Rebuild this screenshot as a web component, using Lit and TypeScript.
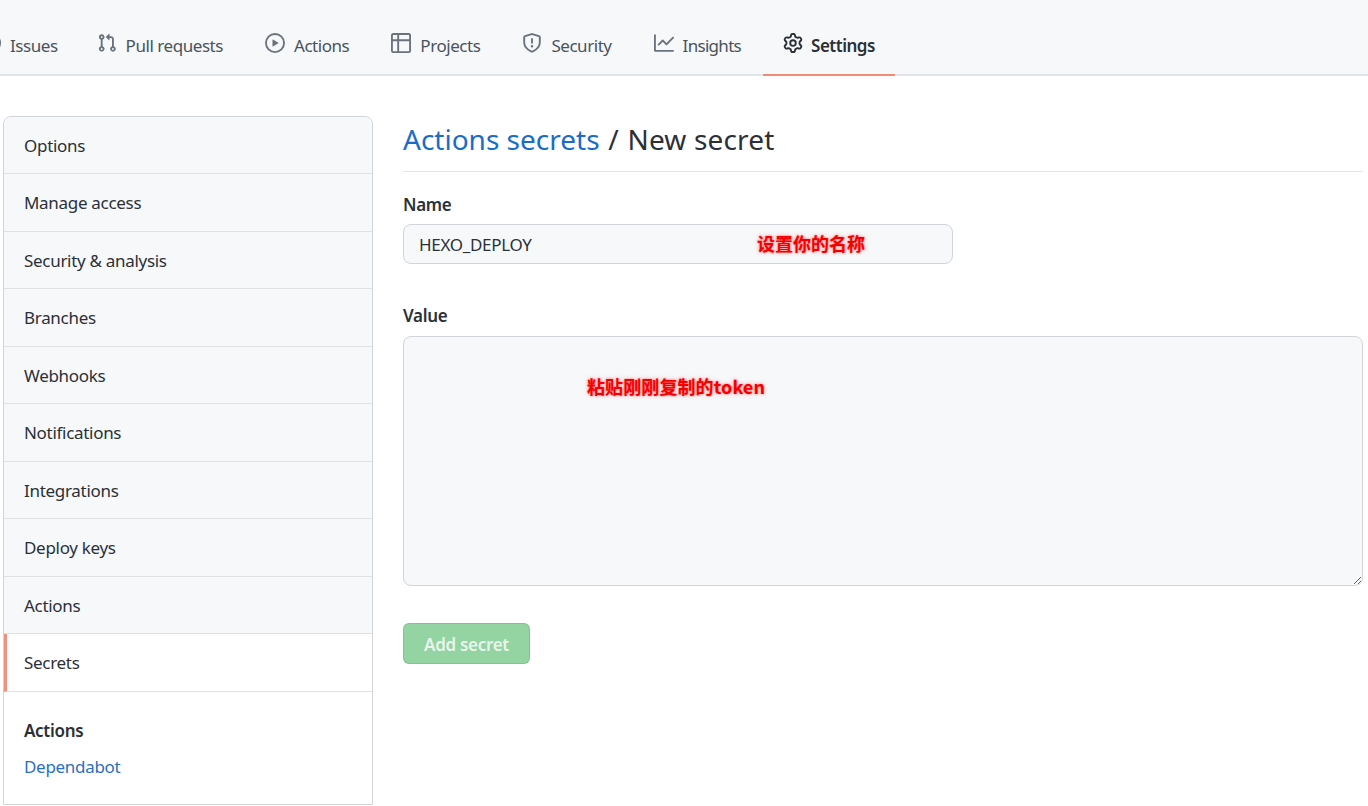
import { LitElement, html, css, svg } from "lit";
import { customElement } from "lit/decorators.js";

const ICONS: Record<string, string> = {
  issue: "M8 9.5a1.5 1.5 0 100-3 1.5 1.5 0 000 3zM8 0a8 8 0 100 16A8 8 0 008 0zM1.5 8a6.5 6.5 0 1113 0 6.5 6.5 0 01-13 0z",
  pr: "M7.177 3.073L9.573.677A.25.25 0 0110 .854v4.792a.25.25 0 01-.427.177L7.177 3.427a.25.25 0 010-.354zM3.75 2.5a.75.75 0 100 1.5.75.75 0 000-1.5zm-2.25.75a2.25 2.25 0 113 2.122v5.256a2.251 2.251 0 11-1.5 0V5.372A2.25 2.25 0 011.5 3.25zM11 2.5h-1V4h1a1 1 0 011 1v5.628a2.251 2.251 0 101.5 0V5A2.5 2.5 0 0011 2.5zm1 10.25a.75.75 0 111.5 0 .75.75 0 01-1.5 0zM3.75 12a.75.75 0 100 1.5.75.75 0 000-1.5z",
  play: "M1.5 8a6.5 6.5 0 1113 0 6.5 6.5 0 01-13 0zM8 0a8 8 0 100 16A8 8 0 008 0zM6.379 5.227A.25.25 0 006 5.442v5.117a.25.25 0 00.379.214l4.264-2.559a.25.25 0 000-.428L6.379 5.227z",
  project: "M0 1.75C0 .784.784 0 1.75 0h12.5C15.216 0 16 .784 16 1.75v12.5A1.75 1.75 0 0114.25 16H1.75A1.75 1.75 0 010 14.25V1.75zM1.5 6.5v7.75c0 .138.112.25.25.25H5v-8H1.5zM5 5H1.5V1.75a.25.25 0 01.25-.25H5V5zm1.5 1.5v8h7.75a.25.25 0 00.25-.25V6.5h-8zm8-1.5h-8V1.5h7.75a.25.25 0 01.25.25V5z",
  shield: "M7.467.133a1.75 1.75 0 011.066 0l5.25 1.68A1.75 1.75 0 0115 3.48V7c0 1.566-.32 3.182-1.303 4.682-.983 1.498-2.585 2.813-5.032 3.855a1.7 1.7 0 01-1.33 0c-2.447-1.042-4.049-2.357-5.032-3.855C1.32 10.182 1 8.566 1 7V3.48a1.75 1.75 0 011.217-1.667l5.25-1.68zm.61 1.429a.25.25 0 00-.153 0l-5.25 1.68a.25.25 0 00-.174.238V7c0 1.358.275 2.666 1.057 3.86.784 1.194 2.121 2.34 4.366 3.297a.2.2 0 00.154 0c2.245-.956 3.582-2.104 4.366-3.298C13.225 9.666 13.5 8.358 13.5 7V3.48a.25.25 0 00-.174-.237l-5.25-1.68zM9 10.5a1 1 0 11-2 0 1 1 0 012 0zm-.25-5.75a.75.75 0 10-1.5 0v3a.75.75 0 001.5 0v-3z",
  graph: "M1.5 1.75a.75.75 0 00-1.5 0v12.5c0 .414.336.75.75.75h14.5a.75.75 0 000-1.5H1.5V1.75zm14.28 2.53a.75.75 0 00-1.06-1.06L10 7.94 7.53 5.47a.75.75 0 00-1.06 0L3.22 8.72a.75.75 0 001.06 1.06L7 7.06l2.47 2.47a.75.75 0 001.06 0l5.25-5.25z",
  gear: "M7.429 1.525a6.593 6.593 0 011.142 0c.036.003.108.036.137.146l.289 1.105c.147.56.55.967.997 1.189.174.086.341.183.501.29.417.278.97.423 1.53.27l1.102-.303c.11-.03.175.016.195.046.219.31.41.641.573.989.014.031.022.11-.059.19l-.815.806c-.411.406-.562.957-.53 1.456a4.588 4.588 0 010 .582c-.032.499.119 1.05.53 1.456l.815.806c.08.08.073.159.059.19a6.494 6.494 0 01-.573.99c-.02.029-.086.074-.195.045l-1.103-.303c-.559-.153-1.112-.008-1.529.27-.16.107-.327.204-.5.29-.449.222-.851.628-.998 1.189l-.289 1.105c-.029.11-.101.143-.137.146a6.613 6.613 0 01-1.142 0c-.036-.003-.108-.037-.137-.146l-.289-1.105c-.147-.56-.55-.967-.997-1.189a4.502 4.502 0 01-.501-.29c-.417-.278-.97-.423-1.53-.27l-1.102.303c-.11.03-.175-.016-.195-.046a6.492 6.492 0 01-.573-.989c-.014-.031-.022-.11.059-.19l.815-.806c.411-.406.562-.957.53-1.456a4.587 4.587 0 010-.582c.032-.499-.119-1.05-.53-1.456l-.815-.806c-.08-.08-.073-.159-.059-.19a6.44 6.44 0 01.573-.99c.02-.029.086-.075.195-.045l1.103.303c.559.153 1.112.008 1.529-.27.16-.107.327-.204.5-.29.449-.222.851-.628.998-1.189l.289-1.105c.029-.11.101-.143.137-.146zM8 0c-.236 0-.47.01-.701.03-.743.065-1.29.615-1.458 1.261l-.29 1.106c-.017.066-.078.158-.211.224a5.994 5.994 0 00-.668.386c-.123.082-.233.09-.3.071L3.27 2.776c-.644-.177-1.392.02-1.82.63a7.977 7.977 0 00-.704 1.217c-.315.675-.111 1.422.363 1.891l.815.806c.05.048.098.147.088.294a6.084 6.084 0 000 .772c.01.147-.038.246-.088.294l-.815.806c-.474.469-.678 1.216-.363 1.891.2.428.436.835.704 1.218.428.609 1.176.806 1.82.63l1.103-.303c.066-.019.176-.011.299.071.213.143.436.272.668.386.133.066.194.158.212.224l.289 1.106c.169.646.715 1.196 1.458 1.26a8.094 8.094 0 001.402 0c.743-.064 1.29-.614 1.458-1.26l.29-1.106c.017-.066.078-.158.211-.224a5.98 5.98 0 00.668-.386c.123-.082.233-.09.3-.071l1.102.302c.644.177 1.392-.02 1.82-.63.268-.382.505-.789.704-1.217.315-.675.111-1.422-.364-1.891l-.814-.806c-.05-.048-.098-.147-.088-.294a6.1 6.1 0 000-.772c-.01-.147.039-.246.088-.294l.814-.806c.475-.469.679-1.216.364-1.891a7.992 7.992 0 00-.704-1.218c-.428-.609-1.176-.806-1.82-.63l-1.103.303c-.066.019-.176.011-.299-.071a5.991 5.991 0 00-.668-.386c-.133-.066-.194-.158-.212-.224L10.16 1.29C9.99.645 9.444.095 8.701.031A8.094 8.094 0 008 0zm1.5 8a1.5 1.5 0 11-3 0 1.5 1.5 0 013 0zM11 8a3 3 0 11-6 0 3 3 0 016 0z",
};

const TABS = [
  ["issue", "Issues"],
  ["pr", "Pull requests"],
  ["play", "Actions"],
  ["project", "Projects"],
  ["shield", "Security"],
  ["graph", "Insights"],
  ["gear", "Settings"],
];
const MENU = ["Options", "Manage access", "Security & analysis", "Branches", "Webhooks", "Notifications", "Integrations", "Deploy keys", "Actions", "Secrets"];

@customElement("app-root")
export class AppRoot extends LitElement {
  static styles = css`
    :host {
      display: block;
      width: 1368px;
      height: 806px;
      overflow: hidden;
      background: #fff;
      color: #2b3036;
      font-family: "Noto Sans", "Noto Sans CJK SC", sans-serif;
      font-size: 17px;
      letter-spacing: -0.3px;
    }
    .tabs {
      display: flex;
      height: 76px;
      box-sizing: border-box;
      background: #f6f8fa;
      border-bottom: 2px solid #e1e4e8;
    }
    .tabnav {
      display: flex;
      margin-left: -39px;
      gap: 2px;
    }
    .tab {
      display: flex;
      align-items: center;
      gap: 9px;
      height: 76px;
      box-sizing: border-box;
      padding: 24px 20px 10px;
      color: #4a535c;
      letter-spacing: -0.45px;
    }
    .tab:first-child { margin-right: -3px; }
    .tab:nth-child(6) { letter-spacing: -0.7px; }
    .tab svg { fill: #6a737d; flex: none; margin-top: -4px; }
    .tab.on {
      color: #2b3036;
      font-weight: 600;
      padding-bottom: 8px;
      border-bottom: 2px solid #f28a74;
      gap: 8px;
      letter-spacing: -0.5px;
    }
    .tab.on svg { fill: #2b3036; }
    .body {
      display: flex;
      padding: 40px 5px 0 3px;
      gap: 30px;
    }
    .side {
      width: 370px;
      flex: none;
      box-sizing: border-box;
      border: 1px solid #d1d5da;
      border-radius: 8px 8px 0 0;
      height: 689px;
    }
    .item {
      display: flex;
      align-items: center;
      box-sizing: border-box;
      height: 57.5px;
      padding: 0.5px 0 0 20px;
      background: #f6f8fa;
      border-bottom: 1px solid #dfe2e5;
    }
    .item:first-child { border-radius: 8px 8px 0 0; height: 57px; }
    .item.on {
      background: #fff;
      border-left: 3px solid #f0917d;
      padding-left: 17px;
    }
    .group { padding: 27px 20px 0; }
    .group h4 { margin: 0 0 12px; font-size: 17px; font-weight: 600; line-height: 24px; }
    .group a { color: #2a6fbf; line-height: 24px; display: block; }
    .main { flex: 1; min-width: 0; }
    h2 {
      margin: 0;
      height: 56px;
      box-sizing: border-box;
      border-bottom: 1px solid #e1e4e8;
      font-size: 28px;
      font-weight: 400;
      line-height: 46px;
      letter-spacing: 0;
    }
    h2 a { color: #1a6cc6; }
    .sep { margin: 0 1.5px; }
    .current { letter-spacing: 0.15px; }
    label { display: block; font-weight: 600; line-height: 24px; }
    .name-label { margin-top: 21px; }
    .value-label { margin-top: 40px; }
    .field { position: relative; }
    .name-field { margin-top: 7px; width: 550px; }
    .value-field { margin-top: 8px; }
    input, textarea {
      display: block;
      box-sizing: border-box;
      width: 100%;
      margin: 0;
      background: #f6f8fa;
      border: 1px solid #d1d5da;
      border-radius: 8px;
      color: #2b3036;
      font: inherit;
      letter-spacing: -0.3px;
      outline: none;
    }
    input { height: 40px; padding: 1px 15px 0; }
    textarea { height: 250px; padding: 10px 15px; }
    .note {
      position: absolute;
      color: #f40000;
      font-family: "Noto Sans CJK SC", "Noto Sans", sans-serif;
      font-size: 18px;
      font-weight: 700;
      line-height: 24px;
      white-space: nowrap;
      letter-spacing: 0;
      text-shadow: 0 0 2px rgba(255, 90, 90, .8), 0 0 4px rgba(255, 140, 140, .7);
      pointer-events: none;
    }
    .note1 { left: 354px; top: 7px; }
    .note2 { left: 184px; top: 38px; letter-spacing: 0.1px; }
    button {
      display: block;
      width: 127px;
      height: 41px;
      margin-top: 37px;
      padding: 2px 0 0;
      background: #94d3a2;
      border: 1px solid rgba(27, 31, 35, .1);
      border-radius: 6px;
      color: rgba(255, 255, 255, .8);
      font: inherit;
      font-weight: 600;
      letter-spacing: -0.3px;
    }
  `;

  private icon(name: string) {
    return html`<svg width="20" height="20" viewBox="0 0 16 16">${svg`<path fill-rule="evenodd" d=${ICONS[name]}></path>`}</svg>`;
  }

  render() {
    return html`
      <div class="tabs">
        <nav class="tabnav">
          ${TABS.map(([i, t]) => html`<div class="tab ${t === "Settings" ? "on" : ""}">${this.icon(i)}<span>${t}</span></div>`)}
        </nav>
      </div>
      <div class="body">
        <aside class="side">
          ${MENU.map((m) => html`<div class="item ${m === "Secrets" ? "on" : ""}">${m}</div>`)}
          <div class="group">
            <h4>Actions</h4>
            <a>Dependabot</a>
          </div>
        </aside>
        <main class="main">
          <h2><a>Actions secrets</a> <span class="sep">/</span> <span class="current">New secret</span></h2>
          <label class="name-label">Name</label>
          <div class="field name-field">
            <input value="HEXO_DEPLOY" />
            <span class="note note1">设置你的名称</span>
          </div>
          <label class="value-label">Value</label>
          <div class="field value-field">
            <textarea></textarea>
            <span class="note note2">粘贴刚刚复制的token</span>
          </div>
          <button disabled>Add secret</button>
        </main>
      </div>
    `;
  }
}
